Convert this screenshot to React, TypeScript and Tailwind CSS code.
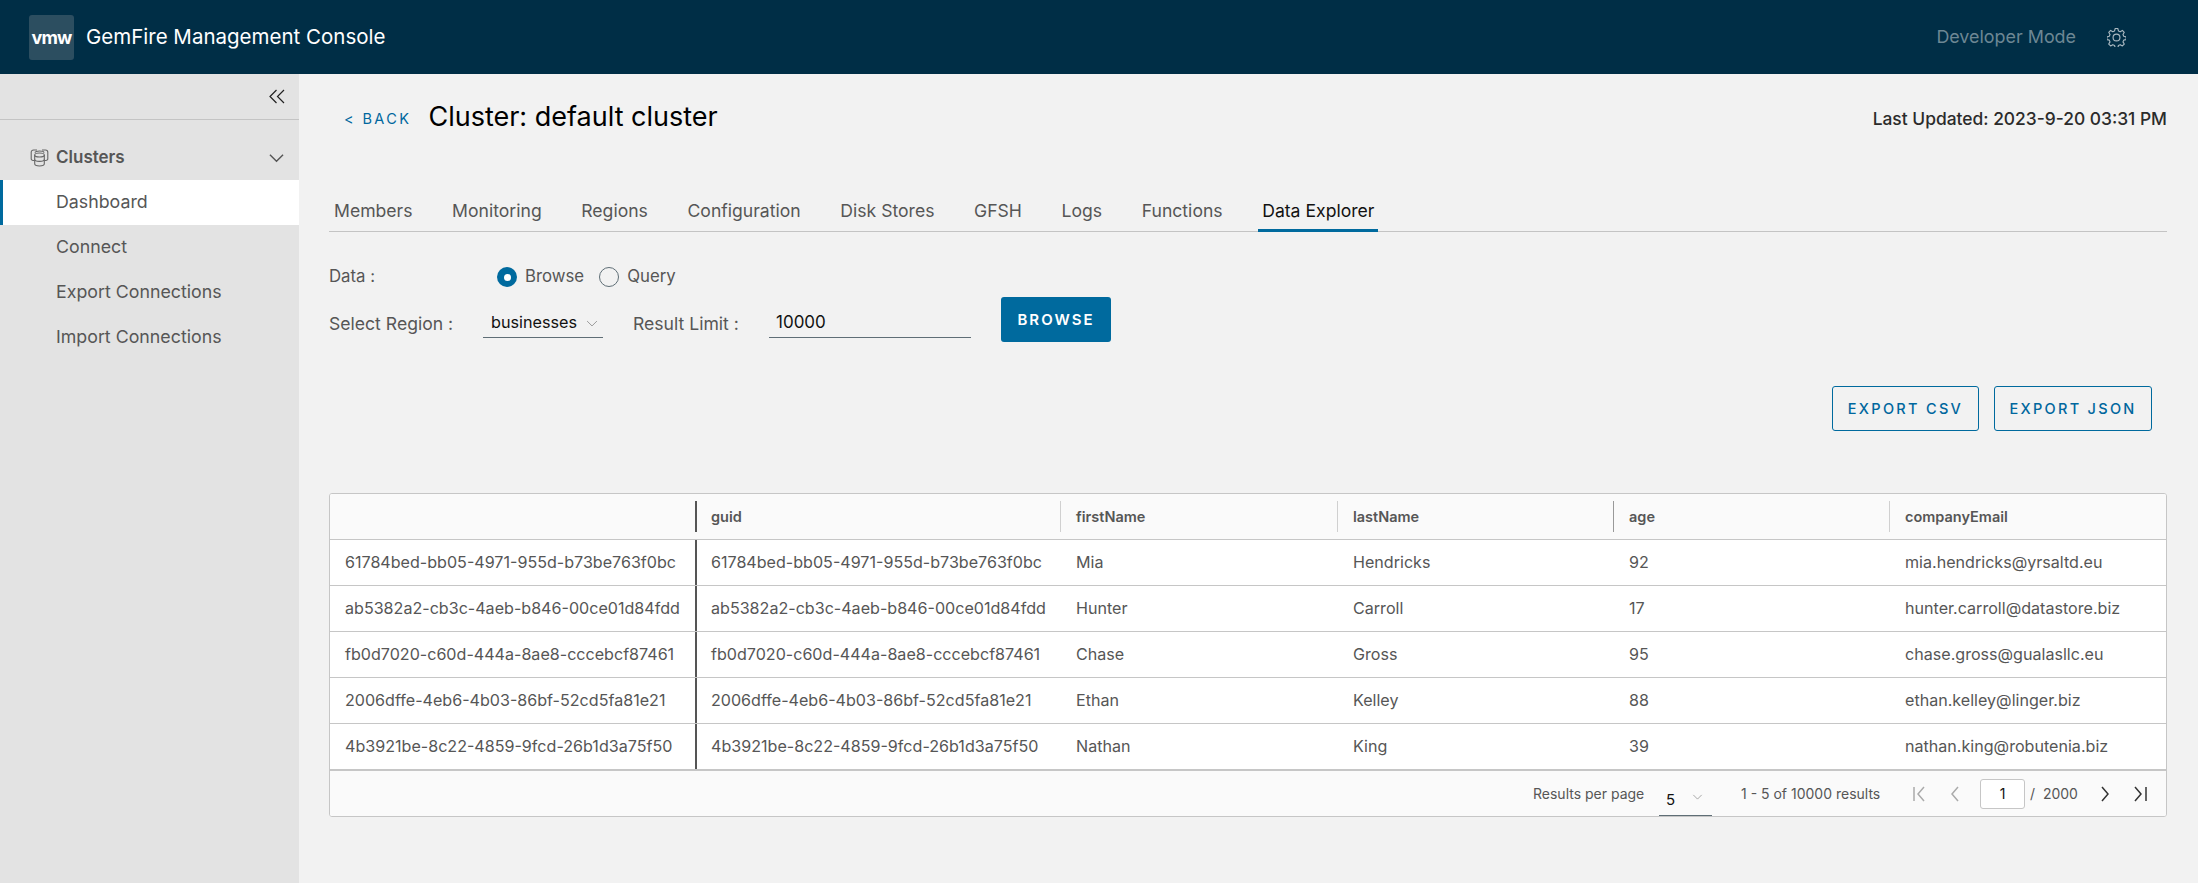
import React from "react";

const F = "font-['Inter','Liberation_Sans',sans-serif]";

const tabs = ["Members", "Monitoring", "Regions", "Configuration", "Disk Stores", "GFSH", "Logs", "Functions", "Data Explorer"];
const rows = [
  ["61784bed-bb05-4971-955d-b73be763f0bc", "Mia", "Hendricks", "92", "mia.hendricks@yrsaltd.eu"],
  ["ab5382a2-cb3c-4aeb-b846-00ce01d84fdd", "Hunter", "Carroll", "17", "hunter.carroll@datastore.biz"],
  ["fb0d7020-c60d-444a-8ae8-cccebcf87461", "Chase", "Gross", "95", "chase.gross@gualasllc.eu"],
  ["2006dffe-4eb6-4b03-86bf-52cd5fa81e21", "Ethan", "Kelley", "88", "ethan.kelley@linger.biz"],
  ["4b3921be-8c22-4859-9fcd-26b1d3a75f50", "Nathan", "King", "39", "nathan.king@robutenia.biz"],
];
const cols = "grid grid-cols-[365px_365px_277px_276px_276px_1fr]";

function Gear() {
  return (
    <svg width="19" height="19" viewBox="0 0 36 36" fill="none" stroke="#a9b8c0" strokeWidth="2.2" strokeLinejoin="round">
      <path d="M15.500 2h5l1.200 4.600 3.300 1.400 4.100-2.400 3.600 3.600-2.400 4.100 1.400 3.300 4.600 1.200v5l-4.600 1.200-1.400 3.300 2.400 4.100-3.600 3.600-4.100-2.400-3.300 1.400-1.200 4.600h-5l-1.200-4.600-3.300-1.400-4.100 2.400-3.600-3.600 2.400-4.100-1.400-3.300-4.600-1.200v-5l4.600-1.200 1.400-3.300-2.400-4.100 3.600-3.600 4.100 2.400 3.300-1.400z" transform="translate(0 -1)" />
      <circle cx="18" cy="18" r="6.500" />
    </svg>
  );
}

function ClusterIcon() {
  return (
    <svg width="19" height="18" viewBox="0 0 19 18" fill="none" stroke="#666" strokeWidth="1.100">
      <path d="M4.500 11.500H3A1.800 1.800 0 0 1 1.200 9.700V3.300A2.300 2.300 0 0 1 3.500 1H7" />
      <path d="M14.500 11.500H16a1.800 1.800 0 0 0 1.800-1.800V3.300A2.300 2.300 0 0 0 15.500 1H12" />
      <path d="M5 3.800C5 2.700 7 2 9.500 2S14 2.700 14 3.800" />
      <ellipse cx="9.500" cy="6" rx="4.800" ry="2" />
      <path d="M4.700 6v8.800c0 1.200 2.200 2.200 4.800 2.200s4.800-1 4.800-2.200V6" />
      <path d="M4.700 10.500c0 1.100 2.200 1.900 4.800 1.900s4.800-.8 4.800-1.900" />
    </svg>
  );
}

function Chevron({ className, color = "#555", w = 1.5 }: { className?: string; color?: string; w?: number }) {
  return (
    <svg className={className} viewBox="0 0 16 10" fill="none" stroke={color} strokeWidth={w}>
      <path d="M1 1.500l7 7 7-7" />
    </svg>
  );
}

function Pager({ d, color }: { d: string; color: string }) {
  return (
    <svg width="16" height="18" viewBox="0 0 16 18" fill="none" stroke={color} strokeWidth="1.500">
      <path d={d} />
    </svg>
  );
}

export default function App() {
  return (
    <div className={`${F} flex h-[883px] w-[2198px] flex-col overflow-hidden bg-[#f2f2f2]`}>
      <header className="flex h-[74px] shrink-0 items-center bg-[#002e46] pl-[29px] pr-[72px]">
        <div className="flex h-[45px] w-[45px] items-center justify-center rounded-[3px] bg-[#2c4e60]">
          <span className="text-[18px] font-bold tracking-[-0.8px] text-white">vmw</span>
        </div>
        <span className="ml-[12px] text-[20.500px] font-normal text-white">GemFire Management Console</span>
        <span className="ml-auto text-[17.900px] text-[#6d8794]">Developer Mode</span>
        <span className="ml-[31px] flex"><Gear /></span>
      </header>
      <div className="flex min-h-0 flex-1">
        <aside className="w-[299px] shrink-0 bg-[#e3e3e3] text-[#565656]">
          <div className="flex h-[46px] items-center justify-end border-b border-[#c4c4c4] pr-[14px]">
            <svg width="16" height="15" viewBox="0 0 16 15" fill="none" stroke="#222" strokeWidth="1.200">
              <path d="M7.500 1L1 7.500 7.500 14M15 1L8.500 7.500 15 14" />
            </svg>
          </div>
          <div className="mt-[15px] flex h-[45px] items-center pl-[30px] pr-[15px]">
            <ClusterIcon />
            <span className="ml-[7px] text-[17px] font-semibold">Clusters</span>
            <Chevron className="ml-auto h-[10px] w-[15px]" />
          </div>
          <div className="flex h-[45px] items-center border-l-[3px] border-[#006a9e] bg-white pl-[53px] text-[17.800px]">Dashboard</div>
          {["Connect", "Export Connections", "Import Connections"].map((t) => (
            <div key={t} className="flex h-[45px] items-center pl-[56px] text-[17.800px]">{t}</div>
          ))}
        </aside>
        <main className="min-w-0 flex-1 pl-[30px] pr-[31px]">
          <div className="flex h-[84px] items-center">
            <a className="ml-[15px] mt-[5px] text-[14.500px] tracking-[2.400px] text-[#00679e]">&lt; BACK</a>
            <h1 className="ml-[17px] mt-[2px] text-[27px] font-normal text-black">Cluster: default cluster</h1>
            <span className="ml-auto mt-[6px] text-[17.400px] font-medium text-[#2b2b2b]">Last Updated: 2023-9-20 03:31 PM</span>
          </div>
          <nav className="mt-[33px] flex h-[41px] items-stretch gap-[39.600px] border-b border-[#c4c4c4] pl-[5px]">
            {tabs.map((t) => {
              const active = t === "Data Explorer";
              return (
                <span key={t} className={`-mb-px flex items-center border-b-[3px] pt-[3px] text-[17.600px] ${active ? "-mx-[4px] border-[#006a9e] px-[4px] text-[#111]" : "border-transparent text-[#565656]"}`}>{t}</span>
              );
            })}
          </nav>
          <div className="mt-[31px] flex h-[28px] items-center text-[16.800px] text-[#565656]">
            <span className="w-[168px]">Data :</span>
            <span className="flex h-[20px] w-[20px] items-center justify-center rounded-full bg-[#006a9e]"><span className="h-[7px] w-[7px] rounded-full bg-white" /></span>
            <span className="ml-[8px]">Browse</span>
            <span className="ml-[15px] h-[20px] w-[20px] rounded-full border border-[#5f6e76]" />
            <span className="ml-[8px]">Query</span>
          </div>
          <div className="mt-[6px] flex h-[45px] items-start text-[17.600px] text-[#565656]">
            <div className="mt-[14px] w-[154px]">Select Region :</div>
            <div className="mt-[12px] flex h-[29px] w-[120px] items-start justify-between border-b border-[#5f6e76] pl-[8px] pr-[5px] pt-[1px] text-[16.200px] text-[#111]">
              <span>businesses</span>
              <Chevron className="mt-[10px] h-[7px] w-[12px]" color="#8a8a8a" w={1.2} />
            </div>
            <div className="ml-[30px] mt-[14px] w-[136px]">Result Limit :</div>
            <div className="mt-[12px] h-[29px] w-[202px] border-b border-[#5f6e76] pl-[7px] pt-[1px] text-[17px] text-[#111]">10000</div>
            <button className="ml-[30px] h-[45px] w-[110px] rounded-[3px] bg-[#006a9e] pt-[1px] text-[15px] font-semibold tracking-[2px] text-white">BROWSE</button>
          </div>
          <div className="mt-[44px] flex justify-end gap-[15px] pr-[15px]">
            <button className="h-[45px] w-[147px] rounded-[3px] border border-[#006a9e] text-[14.500px] font-medium tracking-[2.300px] text-[#00679e]">EXPORT CSV</button>
            <button className="h-[45px] w-[158px] rounded-[3px] border border-[#006a9e] text-[14.500px] font-medium tracking-[2.300px] text-[#00679e]">EXPORT JSON</button>
          </div>
          <div className="mt-[62px] overflow-hidden rounded-[3px] border border-[#c6c6c6] bg-white text-[#565656]">
            <div className={`${cols} h-[46px] items-center border-b border-[#c6c6c6] bg-[#fafafa] text-[14.500px] font-semibold`}>
              <span className="h-[45px]" />
              {["guid", "firstName", "lastName", "age", "companyEmail"].map((h, i) => (
                <span key={h} className={`h-[31px] leading-[31px] ${i === 0 ? "border-l-2 border-[#555] pl-[14px]" : i === 3 ? "border-l border-[#999] pl-[15px]" : "border-l border-[#d0d0d0] pl-[15px]"}`}>{h}</span>
              ))}
            </div>
            {rows.map((r, i) => (
              <div key={r[0]} className={`${cols} items-center border-[#c6c6c6] text-[16.100px] ${i === 4 ? "h-[47px] border-b-2" : "h-[46px] border-b"}`}>
                <span className="pl-[15px]">{r[0]}</span>
                {r.map((c, j) => (
                  <span key={j} className={`flex h-full items-center ${j === 0 ? "border-l-2 border-[#555] pl-[14px]" : "pl-[16px]"}`}>{c}</span>
                ))}
              </div>
            ))}
            <div className="flex h-[45px] items-center bg-[#fafafa] pl-[1203px] text-[14px]">
              <span className="w-[126px]">Results per page</span>
              <div className="flex h-[30px] w-[53px] items-center justify-between self-end border-b border-[#5f6e76] pl-[7px] pr-[9px] text-[15px] text-[#111]">
                <span>5</span>
                <Chevron className="mb-[8px] h-[6px] w-[11px]" color="#888" w={1.200} />
              </div>
              <span className="ml-[29px] w-[172px]">1 - 5 of 10000 results</span>
              <Pager d="M1 2v14M11 2L5 9l6 7" color="#aaa" />
              <span className="ml-[18px] flex"><Pager d="M11 2L5 9l6 7" color="#aaa" /></span>
              <span className="ml-[17px] flex h-[30px] w-[45px] items-center justify-center rounded-[3px] border border-[#c6c6c6] bg-white text-[#111]">1</span>
              <span className="ml-[5px] w-[67px] text-[14px]">/&nbsp; 2000</span>
              <Pager d="M5 2l6 7-6 7" color="#333" />
              <span className="ml-[19px] flex"><Pager d="M3 2l6 7-6 7M14 2v14" color="#333" /></span>
            </div>
          </div>
        </main>
      </div>
    </div>
  );
}
